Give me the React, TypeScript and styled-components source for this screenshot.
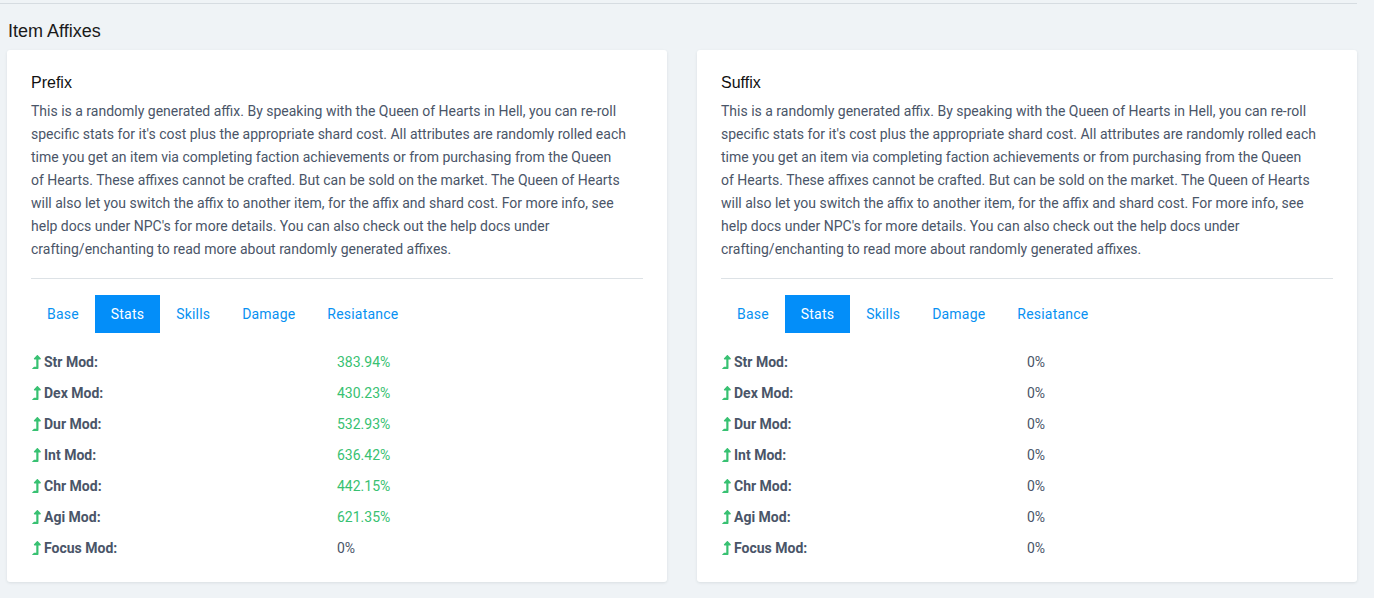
import React from "react";
import styled, { createGlobalStyle } from "styled-components";
import { FaLevelUpAlt } from "react-icons/fa";

const GlobalStyle = createGlobalStyle`
  html, body {
    margin: 0;
    padding: 0;
    background: #eff3f6;
  }
  body {
    font-family: Roboto, "Liberation Sans", Arial, sans-serif;
  }
`;

// "of\u00a0Hearts." keeps the wrap where the original wraps
const DESCRIPTION =
  "This is a randomly generated affix. By speaking with the Queen of Hearts in Hell, you can re-roll specific stats for it's cost plus the appropriate shard cost. All attributes are randomly rolled each time you get an item via completing faction achievements or from purchasing from the Queen of\u00a0Hearts. These affixes cannot be crafted. But can be sold on the market. The Queen of Hearts will also let you switch the affix to another item, for the affix and shard cost. For more info, see help docs under NPC's for more details. You can also check out the help docs under crafting/enchanting to read more about randomly generated affixes.";

const TABS = ["Base", "Stats", "Skills", "Damage", "Resiatance"];

type Stat = { label: string; value: string; positive: boolean };

const prefixStats: Stat[] = [
  { label: "Str Mod:", value: "383.94%", positive: true },
  { label: "Dex Mod:", value: "430.23%", positive: true },
  { label: "Dur Mod:", value: "532.93%", positive: true },
  { label: "Int Mod:", value: "636.42%", positive: true },
  { label: "Chr Mod:", value: "442.15%", positive: true },
  { label: "Agi Mod:", value: "621.35%", positive: true },
  { label: "Focus Mod:", value: "0%", positive: false },
];

const suffixStats: Stat[] = prefixStats.map((s) => ({
  label: s.label,
  value: "0%",
  positive: false,
}));

function AffixCard({ title, stats }: { title: string; stats: Stat[] }) {
  return (
    <Card>
      <CardTitle>{title}</CardTitle>
      <Description>{DESCRIPTION}</Description>
      <Divider />
      <Tabs>
        {TABS.map((t) => (
          <Tab key={t} $active={t === "Stats"}>
            {t}
          </Tab>
        ))}
      </Tabs>
      <StatList>
        {stats.map((s) => (
          <StatRow key={s.label}>
            <StatLabel>
              <UpIcon />
              {s.label}
            </StatLabel>
            <StatValue $positive={s.positive}>{s.value}</StatValue>
          </StatRow>
        ))}
      </StatList>
    </Card>
  );
}

export default function App() {
  return (
    <Page>
      <GlobalStyle />
      <TopRule />
      <Title>Item Affixes</Title>
      <CardGrid>
        <AffixCard title="Prefix" stats={prefixStats} />
        <AffixCard title="Suffix" stats={suffixStats} />
      </CardGrid>
    </Page>
  );
}

const Page = styled.div`
  width: 1357px;
  padding-top: 3px;
  padding-bottom: 17px;
`;

const TopRule = styled.div`
  height: 1px;
  background: #d6dce1;
`;

const Title = styled.h2`
  margin: 16px 0 0 8px;
  font-family: "Liberation Sans", Arial, sans-serif;
  font-weight: 400;
  font-size: 18px;
  line-height: 22px;
  color: #1a1a1a;
`;

const CardGrid = styled.div`
  display: grid;
  grid-template-columns: 660px 660px;
  column-gap: 30px;
  margin: 8px 0 0 7px;
`;

const Card = styled.div`
  background: #fff;
  border-radius: 3px;
  box-shadow: 0 1px 3px rgba(30, 45, 60, 0.1);
  padding: 23px 24px 19px;
`;

const CardTitle = styled.h3`
  margin: 0;
  font-family: "Liberation Sans", Arial, sans-serif;
  font-weight: 400;
  font-size: 16px;
  line-height: 20px;
  color: #111;
`;

const Description = styled.p`
  margin: 7px 0 0;
  font-size: 14px;
  line-height: 23px;
  color: #4a5568;
`;

const Divider = styled.hr`
  margin: 17px 0 0;
  border: 0;
  border-top: 1px solid #dde2e6;
`;

const Tabs = styled.div`
  display: flex;
  margin-top: 16px;
`;

const Tab = styled.div<{ $active?: boolean }>`
  height: 38px;
  padding: 0 16px;
  display: flex;
  align-items: center;
  font-size: 14px;
  letter-spacing: 0.2px;
  color: ${(p) => (p.$active ? "#fff" : "#0791f2")};
  background: ${(p) => (p.$active ? "#038ef9" : "transparent")};
`;

const StatList = styled.div`
  margin-top: 13px;
`;

const StatRow = styled.div`
  display: grid;
  grid-template-columns: 306px 1fr;
  height: 31px;
  align-items: center;
  font-size: 14px;
`;

const StatLabel = styled.div`
  display: flex;
  align-items: center;
  font-weight: 700;
  color: #4a5568;
`;

const UpIcon = styled(FaLevelUpAlt)`
  width: 9px;
  height: 14px;
  margin: 0 3px 0 1px;
  color: #38c172;
`;

const StatValue = styled.div<{ $positive?: boolean }>`
  color: ${(p) => (p.$positive ? "#38c172" : "#4a5568")};
`;
